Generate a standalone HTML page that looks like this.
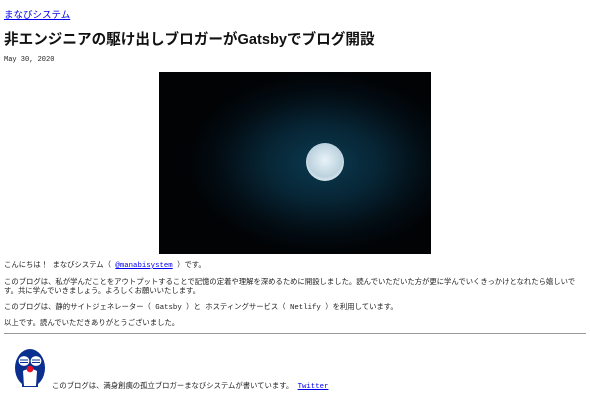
<!DOCTYPE html>
<html><head><meta charset="utf-8"><style>
*{margin:0;padding:0;box-sizing:border-box}
body{width:590px;height:407px;background:#fff;position:relative;overflow:hidden;font-family:"Liberation Sans","Noto Sans CJK JP",sans-serif;color:#111}
.a{position:absolute;white-space:nowrap}
a{color:#0000ee;text-decoration:underline}
.p{font-size:7.35px;line-height:9px;font-family:"Liberation Mono","Noto Sans CJK JP",monospace;color:#222}
</style></head><body>
<div class="a" style="left:4px;top:7px;font-size:9.5px"><a>まなびシステム</a></div>
<div class="a" style="left:4px;top:28px;font-size:14.6px;font-weight:bold">非エンジニアの駆け出しブロガーがGatsbyでブログ開設</div>
<div class="a" style="left:4px;top:56px;font-size:7px;font-family:'Liberation Mono',monospace;color:#222">May 30, 2020</div>
<svg class="a" style="left:159px;top:72px" width="272" height="182">
<defs><radialGradient id="g" cx="0.6" cy="0.5" r="0.5"><stop offset="0" stop-color="#0b3a50"/><stop offset="0.4" stop-color="#072636"/><stop offset="0.75" stop-color="#030d14"/><stop offset="1" stop-color="#010305"/></radialGradient>
<radialGradient id="m" cx="0.5" cy="0.45" r="0.55"><stop offset="0" stop-color="#e8f2f8"/><stop offset="0.8" stop-color="#bcd2de"/><stop offset="1" stop-color="#dbe9f0"/></radialGradient></defs>
<rect width="272" height="182" fill="#010305"/>
<rect width="272" height="182" fill="url(#g)"/>
<circle cx="166" cy="90" r="19" fill="url(#m)"/>
</svg>
<div class="a p" style="left:4px;top:262px">こんにちは！ まなびシステム（ <a>@manabisystem</a> ）です。</div>
<div class="a p" style="left:4px;top:279px">このブログは、私が学んだことをアウトプットすることで記憶の定着や理解を深めるために開設しました。読んでいただいた方が更に学んでいくきっかけとなれたら嬉しいで<br>す。共に学んでいきましょう。よろしくお願いいたします。</div>
<div class="a p" style="left:4px;top:304px">このブログは、静的サイトジェネレーター（ Gatsby ）と ホスティングサービス（ Netlify ）を利用しています。</div>
<div class="a p" style="left:4px;top:320px">以上です。読んでいただきありがとうございました。</div>
<div class="a" style="left:4px;top:333px;width:582px;height:1px;background:#999"></div>
<svg class="a" style="left:12px;top:347px" width="36" height="44" viewBox="0 0 36 44">
<ellipse cx="18" cy="21" rx="15" ry="19" fill="#0a2f8f"/>
<rect x="10" y="34" width="16" height="6" fill="#0a2f8f"/>
<ellipse cx="12" cy="14" rx="6" ry="5.5" fill="#fff" stroke="#0a2f8f" stroke-width="1.2"/>
<ellipse cx="24" cy="14" rx="6" ry="5.5" fill="#fff" stroke="#0a2f8f" stroke-width="1.2"/>
<path d="M8 13h8M8 15.5h8M20 13h8M20 15.5h8" stroke="#0a2f8f" stroke-width="0.9"/>
<path d="M11 24 Q18 20 25 24 L24 39 L12 39 Z" fill="#fff"/>
<circle cx="18" cy="22" r="3.3" fill="#e8132b"/>
</svg>
<div class="a p" style="left:52px;top:383px">このブログは、満身創痍の孤立ブロガーまなびシステムが書いています。 <a>Twitter</a></div>
</body></html>
